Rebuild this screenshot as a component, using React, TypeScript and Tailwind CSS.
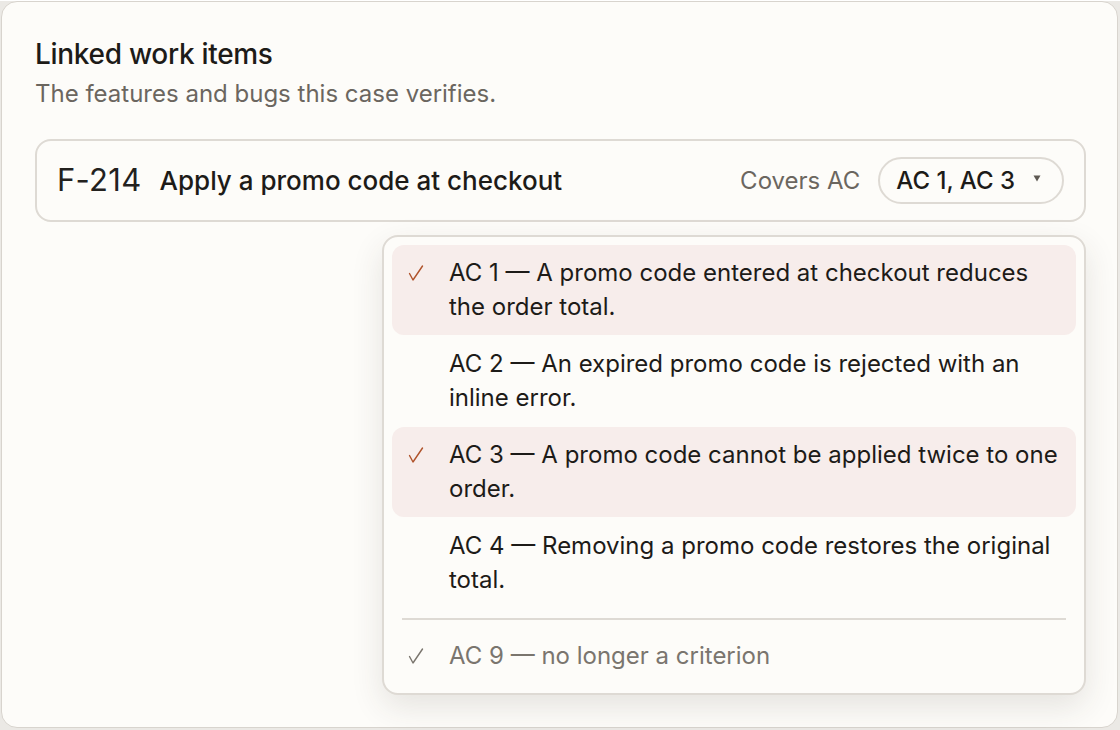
import React from "react";

type Criterion = { id: string; text: string; checked: boolean };

const criteria: Criterion[] = [
  { id: "AC 1", text: "A promo code entered at checkout reduces the order total.", checked: true },
  { id: "AC 2", text: "An expired promo code is rejected with an inline error.", checked: false },
  { id: "AC 3", text: "A promo code cannot be applied twice to one order.", checked: true },
  { id: "AC 4", text: "Removing a promo code restores the original total.", checked: false },
];

const Check: React.FC<{ className?: string }> = ({ className }) => (
  <svg viewBox="0 0 16 16" width="16" height="16" className={className} fill="none">
    <path d="M1.5 8.5 L5 15 L14.5 1" stroke="currentColor" strokeWidth="1.4" strokeLinecap="round" strokeLinejoin="round" />
  </svg>
);

const App: React.FC = () => {
  return (
    <div className="min-h-screen bg-[#ebe9e5] font-['Inter','Noto_Sans',sans-serif] text-[#1d1b18]">
      <div className="ml-px mt-px w-[1117px] h-[727px] rounded-[16px] border border-[#d8d4ce] bg-[#fdfcf9] pl-[33px] pr-[31px] pt-[34px]">
        <h2 className="text-[28px] leading-[36px] font-medium tracking-[-0.3px]">Linked work items</h2>
        <p className="mt-[6px] text-[24px] leading-[32px] text-[#6b665f]">The features and bugs this case verifies.</p>

        <div className="mt-[29px] flex h-[83px] items-center rounded-[16px] border-2 border-[#dedad4] pl-[20px] pr-[20px]">
          <span className="text-[31px] tracking-[0.3px] text-[#23211e]">F-214</span>
          <span className="ml-[18px] text-[26px] font-medium">Apply a promo code at checkout</span>
          <div className="ml-auto flex items-center gap-[18px]">
            <span className="text-[24px] text-[#6b665f]">Covers AC</span>
            <button className="flex h-[47px] items-center gap-[18px] rounded-full border-2 border-[#dedad4] pl-[16px] pr-[21px] text-[24px] font-medium">
              <span>AC 1, AC 3</span>
              <svg viewBox="0 0 8 7" width="8" height="7" className="mt-[-4px] text-[#5e5953]">
                <path d="M0.5 0.5 H7.5 L4 6.5 Z" fill="currentColor" />
              </svg>
            </button>
          </div>
        </div>

        <div className="flex justify-end">
          <div className="mt-[13px] w-[704px] rounded-[16px] border-2 border-[#dedad4] bg-[#fdfcf9] p-[8px] shadow-[0_12px_32px_rgba(60,50,40,0.12)]">
            <div className="flex flex-col gap-[1px]">
              {criteria.map((c) => (
                <div
                  key={c.id}
                  className={`flex rounded-[12px] py-[11px] pl-[16px] pr-[14px] ${c.checked ? "bg-[#f7edeb]" : ""}`}
                >
                  <span className="flex h-[34px] w-[41px] shrink-0 items-center">
                    {c.checked && <Check className="text-[#b0532b]" />}
                  </span>
                  <span className="text-[24px] leading-[34px]">
                    {c.id} — {c.text}
                  </span>
                </div>
              ))}
            </div>
            <div className="mx-[10px] mt-[10px] border-t-2 border-[#dedad4]" />
            <div className="flex pt-[19px] pb-[12px] pl-[16px]">
              <span className="flex h-[34px] w-[41px] shrink-0 items-center">
                <Check className="text-[#7a756e]" />
              </span>
              <span className="text-[24px] leading-[34px] text-[#7a756e]">AC 9 — no longer a criterion</span>
            </div>
          </div>
        </div>
      </div>
    </div>
  );
};

export default App;
